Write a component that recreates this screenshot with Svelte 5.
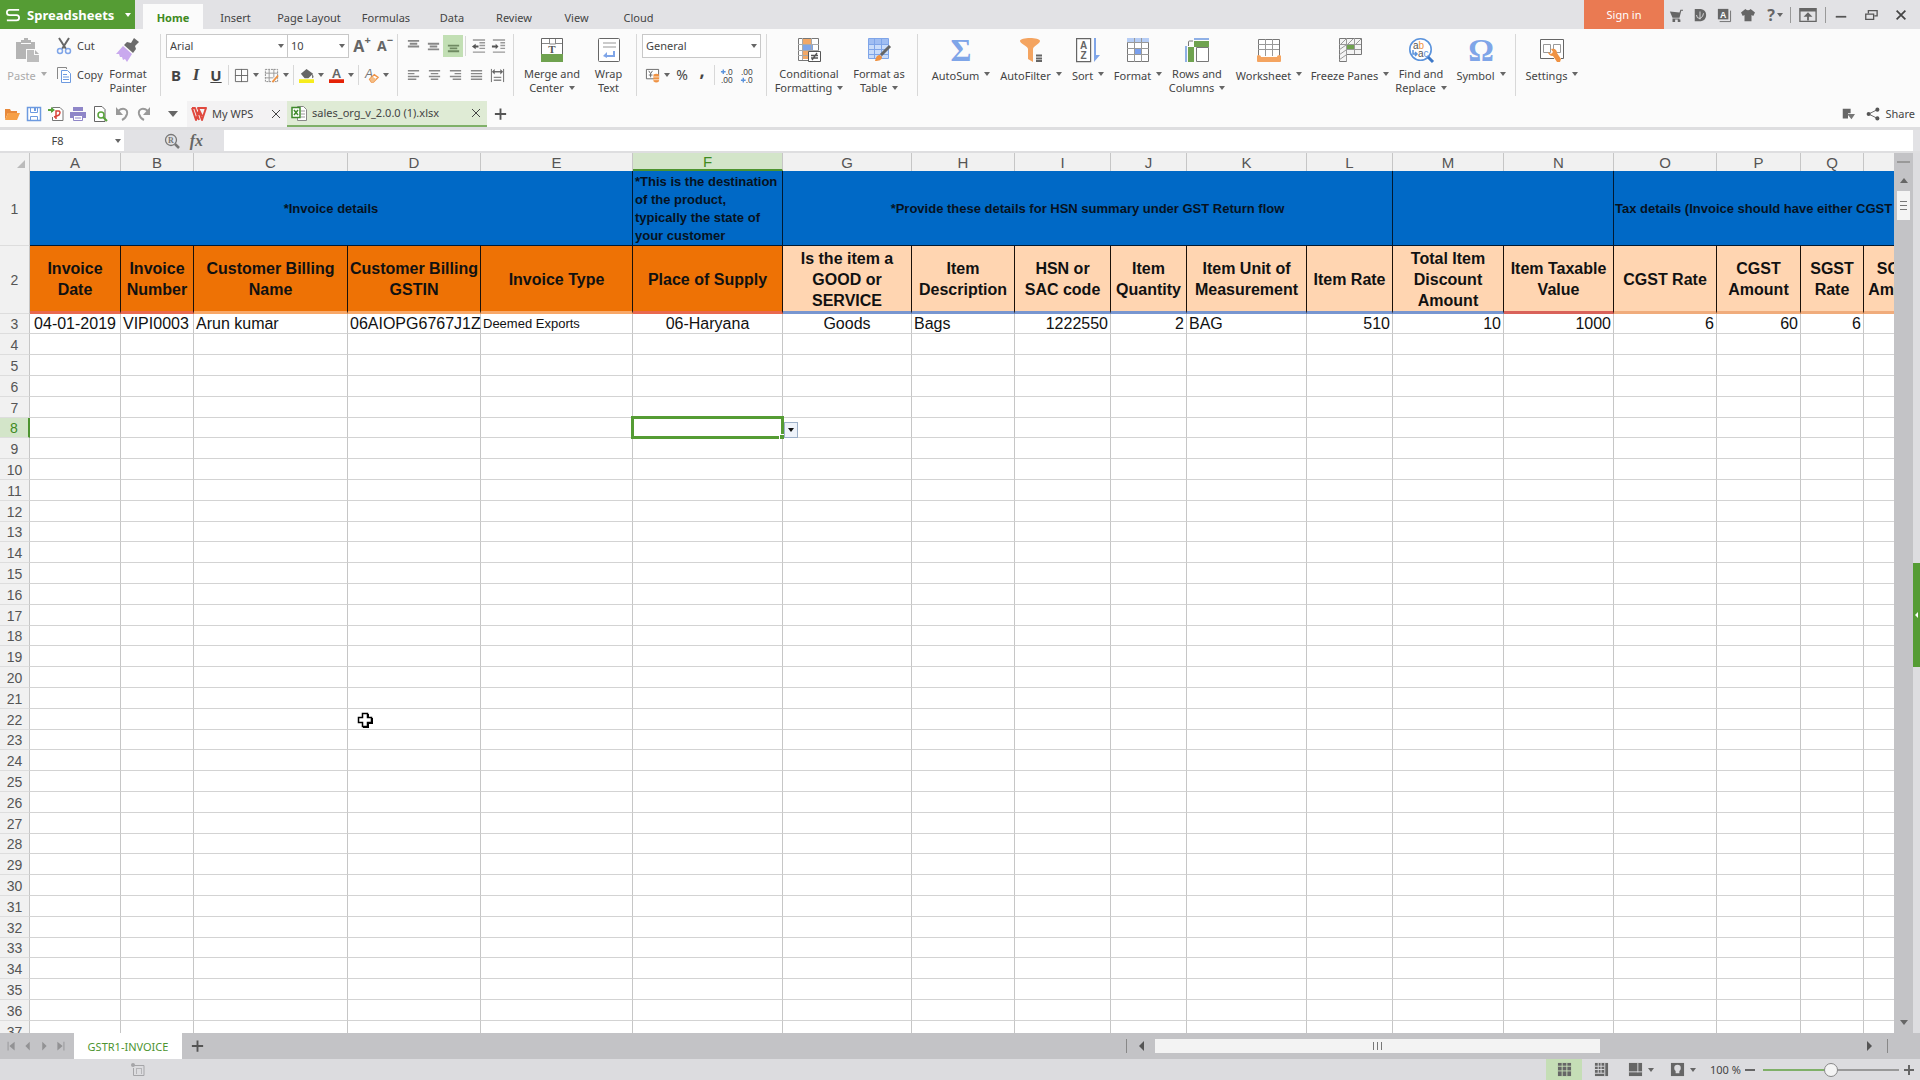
<script>
    let zoom = $state(50);
    let cellRef = $state("F8");
    let formula = $state("");
    let activeTab = $state("Home");

    const tabs = [
        { name: "Home", width: 60 },
        { name: "Insert", width: 65 },
        { name: "Page Layout", width: 82 },
        { name: "Formulas", width: 72 },
        { name: "Data", width: 60 },
        { name: "Review", width: 64 },
        { name: "View", width: 61 },
        { name: "Cloud", width: 63 },
    ];

    const editTools = [
        { icon: "autosum", lines: ["AutoSum"], width: 72 },
        { icon: "filter", lines: ["AutoFilter"], width: 68 },
        { icon: "sort", lines: ["Sort"], width: 46 },
        { icon: "format", lines: ["Format"], width: 54 },
        { icon: "rows", lines: ["Rows and", "Columns"], width: 64 },
        { icon: "worksheet", lines: ["Worksheet"], width: 80 },
        { icon: "freeze", lines: ["Freeze Panes"], width: 82 },
        { icon: "find", lines: ["Find and", "Replace"], width: 60 },
        { icon: "symbol", lines: ["Symbol"], width: 60 },
    ];

    // head: second row label, tone: header colour, rule: line under the header
    const columns = [
        { id: "A", width: 91, head: ["Invoice", "Date"], tone: "dark", rule: "red", value: "04-01-2019", align: "center" },
        { id: "B", width: 73, head: ["Invoice", "Number"], tone: "dark", rule: "red", value: "VIPI0003", align: "left" },
        { id: "C", width: 154, head: ["Customer Billing", "Name"], tone: "dark", rule: "sand", value: "Arun kumar", align: "left" },
        { id: "D", width: 133, head: ["Customer Billing", "GSTIN"], tone: "dark", rule: "sand", value: "06AIOPG6767J1Z", align: "left" },
        { id: "E", width: 152, head: ["Invoice Type"], tone: "dark", rule: "sand", value: "Deemed Exports", align: "compact" },
        { id: "F", width: 150, head: ["Place of Supply"], tone: "dark", rule: "red", value: "06-Haryana", align: "center" },
        { id: "G", width: 129, head: ["Is the item a", "GOOD or", "SERVICE"], tone: "light", rule: "blue", value: "Goods", align: "center" },
        { id: "H", width: 103, head: ["Item", "Description"], tone: "light", rule: "blue", value: "Bags", align: "left" },
        { id: "I", width: 96, head: ["HSN or", "SAC code"], tone: "light", rule: "blue", value: "1222550", align: "right" },
        { id: "J", width: 76, head: ["Item", "Quantity"], tone: "light", rule: "blue", value: "2", align: "right" },
        { id: "K", width: 120, head: ["Item Unit of", "Measurement"], tone: "light", rule: "blue", value: "BAG", align: "left" },
        { id: "L", width: 86, head: ["Item Rate"], tone: "light", rule: "blue", value: "510", align: "right" },
        { id: "M", width: 111, head: ["Total Item", "Discount", "Amount"], tone: "light", rule: "blue", value: "10", align: "right" },
        { id: "N", width: 110, head: ["Item Taxable", "Value"], tone: "light", rule: "crimson", value: "1000", align: "right" },
        { id: "O", width: 103, head: ["CGST Rate"], tone: "light", rule: "tan", value: "6", align: "right" },
        { id: "P", width: 84, head: ["CGST", "Amount"], tone: "light", rule: "tan", value: "60", align: "right" },
        { id: "Q", width: 63, head: ["SGST", "Rate"], tone: "light", rule: "tan", value: "6", align: "right" },
        { id: "", width: 70, head: ["SGST", "Amount"], tone: "light", rule: "tan", value: "", align: "right" },
    ];
    const tableWidth = columns.reduce((sum, c) => sum + c.width, 30);

    const emptyRows = Array.from({ length: 36 }, (_, i) => i + 4);

    const icons = {
        paste: `<path fill="#b4b4b4" d="M1 4h5V2h3V0h4v2h3v2h4v7h-9v10H1z"/><path fill="#fbfbfb" d="M6 5h10v1H6z"/><path fill="#bdbdbd" d="M12 12h7v5h5v7H12z"/><path fill="#b4b4b4" d="M20 12l4 4h-4z"/>`,
        brush: `<path fill="#6b6b6b" d="M18 0l5 4-4 4 1 3-3 4-9-8 3-3 4 1z"/><path fill="#c9a9ee" d="M7 8l9 8-5 8-2-3-2 1-1-3-2 0-1-3-3 0z"/>`,
        merge: `<path fill="#fff" stroke="#666" d="M1.500.500h21v23h-21z"/><path fill="#6fa24f" d="M1 16h22v8H1z"/><path fill="none" stroke="#888" d="M9.500 1v5h6V1M2 5.500h7M16 5.500h6"/><text x="12" y="15" font-size="11" font-family="Liberation Serif" font-weight="bold" text-anchor="middle" fill="#555">T</text>`,
        wrap: `<rect x="1.500" y=".5" width="21" height="23" rx="1" fill="#fff" stroke="#666"/><path stroke="#bbb" stroke-width="1.500" d="M6 5h13M6 9h13"/><path fill="#7fa5e8" d="M16 13h2v6h-8v1l-4-2 4-4v3h6z"/>`,
        conditional: `<path fill="#fff" stroke="#777" d="M1.500.500h20v22h-20z"/><path fill="#f3a866" d="M6 1h8v5H6zM6 12h7v9H6z"/><path fill="#7fa5e8" d="M6 6h10v6H6z"/><path fill="none" stroke="#aaa" d="M1 6.500h21M1 12.500h21M1 17.500h10M5.500 0v22M14.500 0v12"/><path fill="#fff" stroke="#555" d="M11.500 13.500h12v10h-12z"/><path stroke="#555" stroke-width="1.300" d="M14 17.500h7M14 20h7M20 15l-5 7"/>`,
        tableFormat: `<path fill="#c9dcfa" stroke="#7fa5e8" d="M1.500.500h20v20h-20z"/><path fill="#9fbdf2" d="M2 1h19v5H2z"/><path fill="none" stroke="#7fa5e8" d="M1 6.500h20M1 11.500h20M1 16.500h20M7.500 1v20M14.500 1v20"/><path stroke="#666" stroke-width="3" d="M23 8l-9 9"/><path fill="#ef9243" d="M8 23c1-4 2-6 5-6l2 2c0 3-3 4-7 4z"/>`,
        autosum: `<text x="12" y="23" font-size="32" font-family="Liberation Serif" font-weight="bold" text-anchor="middle" fill="#7fa5e8">Σ</text>`,
        filter: `<path fill="#f4a460" d="M1 3c0-4 20-4 20 0 0 3-7 5-7 8v13l-5-3V11C9 8 1 6 1 3z"/><path stroke="#666" stroke-width="2" d="M17 17.500h6M17 20.500h6M17 23h6"/>`,
        sort: `<path fill="#fff" stroke="#666" stroke-width="1.200" d="M.6.600h14v23H.6z"/><text x="7.500" y="11" font-size="10" font-family="Liberation Sans" font-weight="bold" text-anchor="middle" fill="#666">A</text><text x="7.500" y="21" font-size="10" font-family="Liberation Sans" font-weight="bold" text-anchor="middle" fill="#666">Z</text><path fill="#7fa5e8" d="M18 0h2v17h4l-6 7z"/>`,
        format: `<path fill="#fff" stroke="#777" d="M1.500.500h21v23h-21z"/><path fill="#b6cdf5" d="M1 0h22v4H1z"/><path fill="#7aa0ee" d="M9 10h7v6H9z"/><path fill="none" stroke="#999" d="M1 4.500h22M1 10.500h22M1 16.500h22M8.500 0v24M15.500 0v24"/>`,
        rows: `<path fill="#fff" stroke="#777" d="M11.500 9.500h12v14h-12z"/><path fill="#6fa24f" d="M9 3h15v6H9zM3 9h6v15H3z"/><path stroke="#8fb0e6" stroke-width="2" d="M9 1h15M1 8v16"/><path fill="none" stroke="#777" d="M3.500 8V4q0-1 1-1H8"/>`,
        worksheet: `<path fill="#fff" stroke="#777" d="M1.500 1.500h21v20h-21z"/><path fill="none" stroke="#999" d="M1 6.500h21M1 11.500h21M8.500 1v17M15.500 1v17"/><path fill="#f4a460" d="M1 17q3 0 3 2h16q0-2 3-2l1 1v5q0 1-1 1H1q-1 0-1-1v-5z"/>`,
        freeze: `<path fill="#f4f4f4" stroke="#777" d="M8.500 23.500h-7V.500h22v16h-15z"/><path fill="#6fa24f" d="M9 6h8v6H9z"/><path fill="none" stroke="#999" d="M8.500 0v24M1 6.500h22M9 11.500h14M16.500 0v16M1 12l7-5M1 17l7-5M1 22l7-5M3 6l5-5M10 6l5-5M18 6l5-5"/>`,
        find: `<circle cx="11.500" cy="11.500" r="10.700" fill="#fff" stroke="#5b93dc" stroke-width="1.600"/><path stroke="#3d78c8" stroke-width="3" d="M19 19l5 5"/><text x="4" y="11" font-size="10" font-family="Liberation Sans" fill="#555">a<tspan fill="#ef9243">b</tspan></text><text x="9" y="19" font-size="10" font-family="Liberation Sans" fill="#555">a<tspan fill="#5b93dc">c</tspan></text><path fill="none" stroke="#5b93dc" stroke-width="1.500" d="M4 12v4h4M6 14l2 2-2 2"/>`,
        symbol: `<text x="12" y="23" font-size="32" font-family="Liberation Serif" font-weight="bold" text-anchor="middle" fill="#7fa5e8">Ω</text>`,
        settings: `<path fill="#fff" stroke="#666" d="M14 20.500H.500v-19h23v19H21"/><path fill="none" stroke="#999" d="M3.500 6.500h7v8h-7zM13.500 6.500h7v8h-7z"/><path fill="#ef9243" d="M8 14l3 2 2-2-2-3c4-1 6 1 6 4l4 6-1 3h-3l-4-6c-3 0-5-2-5-4z"/>`,

        cut: `<path stroke="#666" stroke-width="2" d="M3 0l7 11M13 0L6 11"/><circle cx="4" cy="13" r="2.500" fill="none" stroke="#7fa5e8" stroke-width="1.500"/><circle cx="12" cy="13" r="2.500" fill="none" stroke="#7fa5e8" stroke-width="1.500"/>`,
        copy: `<path fill="none" stroke="#888" d="M1.500 12V.500h9V2"/><path fill="#fff" stroke="#6d9ae0" d="M5.500 3.500h6l3 3v9h-9z"/><path stroke="#6d9ae0" d="M7 7.500h4M7 10h6M7 12.500h6"/>`,
        border: `<path fill="none" stroke="#666" d="M1.500 1.500h13v13h-13zM8 1v14M1 8h14"/>`,
        drawBorder: `<path fill="none" stroke="#888" stroke-dasharray="2 1" d="M1.500 1.500h13v13h-13z"/><path stroke="#999" d="M5.500 1v14M10.500 1v9M1 5.500h14M1 10.500h9"/><path stroke="#ef9243" stroke-width="2" d="M15 8l-6 7"/>`,
        fill: `<path fill="#666" d="M2 6l6-5 7 5-5 5H6zM14 6q3 4 0 5z"/><path fill="#f6ec1d" d="M0 12h16v4H0z"/>`,
        fontColor: `<text x="8" y="11" font-size="14" font-family="Liberation Sans" font-weight="bold" text-anchor="middle" fill="#666">A</text><path fill="#e52207" d="M0 12h16v4H0z"/>`,
        clear: `<text x="1" y="11" font-size="13" font-family="Liberation Sans" font-style="italic" fill="#777">A</text><path fill="#fff" stroke="#ef9243" stroke-width="1.500" d="M6 12l5-5 4 3-5 5H8z"/><path fill="#f4bd86" d="M9 9l4 3-3 3H8l-2-3z"/>`,
        top: `<path stroke="#888" stroke-width="2" d="M2 2h12M4 5h8M2 8h12"/>`,
        middle: `<path stroke="#888" stroke-width="2" d="M2 5h12M4 8h8M2 11h12"/>`,
        bottom: `<path stroke="#6f8a62" stroke-width="2" d="M2 7h12M4 10h8M2 13h12"/>`,
        outdent: `<path stroke="#999" stroke-width="1.500" d="M2 1h13M9 4h6M9 7h6M9 10h6M2 14h13"/><path fill="#555" d="M1 8l4-3v2h3v2H5v2z"/>`,
        indent: `<path stroke="#999" stroke-width="1.500" d="M2 1h13M10 4h5M10 7h5M10 10h5M2 14h13"/><path fill="#555" d="M8 8L5 5v2H1v2h4v2z"/>`,
        left: `<path stroke="#888" stroke-width="1.500" d="M2 3h12M2 6h7M2 9h12M2 12h9"/>`,
        center: `<path stroke="#888" stroke-width="1.500" d="M2 3h12M4 6h8M2 9h12M4 12h8"/>`,
        right: `<path stroke="#888" stroke-width="1.500" d="M2 3h12M7 6h7M2 9h12M5 12h9"/>`,
        justify: `<path stroke="#888" stroke-width="1.500" d="M2 3h12M2 6h12M2 9h12M2 12h12"/>`,
        distribute: `<path stroke="#666" d="M1.500 1v14M14.500 1v14"/><path stroke="#666" stroke-width="1.500" d="M4 4h8"/><path fill="#666" d="M2 4l3-3v6zM14 4l-3-3v6z"/><path stroke="#888" stroke-width="1.500" d="M4 10h8M4 13h8"/>`,
        currency: `<path fill="#fff" stroke="#666" d="M1.500 1.500h13v10h-13z"/><path fill="none" stroke="#666" d="M4 3l2 3 2-3M6 6v4M4 7.500h4"/><path fill="#ef9243" d="M9 7q3-2 6 0v7q-3 3-6 0z"/><path stroke="#fbe0c4" d="M9 9.500h6M9 12.500h6"/>`,
        incDecimal: `<path fill="none" stroke="#5b93dc" stroke-width="1.500" d="M1 4h5M3.500 1.500v5"/><text x="6" y="7" font-size="9" font-family="Liberation Sans" fill="#444">.0</text><text x="1" y="16" font-size="9" font-family="Liberation Sans" fill="#444">.00</text>`,
        decDecimal: `<text x="1" y="7" font-size="9" font-family="Liberation Sans" fill="#444">.00</text><path fill="none" stroke="#5b93dc" stroke-width="1.500" d="M1 13h5M3.500 10.500v5"/><text x="6" y="16" font-size="9" font-family="Liberation Sans" fill="#444">.0</text>`,

        open: `<path fill="#e8893a" d="M1 3h5l1 2h6v2H4l-3 7z"/><path fill="#f7a046" d="M4 7h12l-3 7H1z"/>`,
        save: `<path fill="#fff" stroke="#6d9ae0" stroke-width="1.500" d="M1.500 1.500h13v13h-13z"/><path fill="none" stroke="#6d9ae0" d="M4.500 1v5.500h7V1"/><path fill="#6d9ae0" d="M8 2h2v3H8z"/><path fill="none" stroke="#6d9ae0" d="M4.500 15v-4.500h7V15"/>`,
        pdf: `<path fill="#fff" stroke="#777" d="M4.500 6V1.500H12l3 3v10H4.500V11"/><path fill="none" stroke="#d9453b" stroke-width="1.500" d="M8 13V5h3q2 1 0 4-2 1-5 2"/><path fill="#57a33a" d="M0 3h3V1l4 3-4 3V5H0z"/>`,
        print: `<path fill="#8f86c8" d="M3 1h10v4H3zM0 6h16v6H0z"/><path fill="#fff" stroke="#8f86c8" d="M3.500 9.500h9v5h-9z"/><path stroke="#8f86c8" d="M5 12h6"/>`,
        preview: `<path fill="#fff" stroke="#666" d="M2.500.500H10l3 3v12H2.500z"/><circle cx="9" cy="9" r="3" fill="#fff" stroke="#57a33a" stroke-width="1.500"/><path stroke="#57a33a" stroke-width="2" d="M11 11l4 4"/>`,
        undo: `<path fill="none" stroke="#999" stroke-width="2" d="M4 5c5-4 10-2 9 3-1 4-3 5-5 6"/><path fill="#999" d="M2 1v8h7z"/>`,
        redo: `<path fill="none" stroke="#999" stroke-width="2" d="M12 5C7 1 2 3 3 8c1 4 3 5 5 6"/><path fill="#999" d="M14 1v8H7z"/>`,
        wps: `<path fill="none" stroke="#e0483e" stroke-width="2" stroke-linejoin="round" d="M1 2l4 12 3-9 3 9 4-12H7l4 8M1 2h3l4 12"/>`,
        sheet: `<path fill="#fff" stroke="#888" d="M6.500 1.500h6l3 3v11h-9z"/><path stroke="#999" d="M10 6h4M10 9h4M10 12h4"/><path fill="#fff" stroke="#3f8a2b" stroke-width="1.500" d="M1 2.500h8v10H1z"/><path stroke="#3f8a2b" stroke-width="1.500" d="M3 5l4 5M7 5l-4 5"/>`,
        search: `<circle cx="7" cy="7" r="5.500" fill="none" stroke="#777" stroke-width="1.300"/><text x="7" y="10" font-size="8" font-family="Liberation Serif" font-weight="bold" text-anchor="middle" fill="#777">R</text><path stroke="#777" stroke-width="2.500" d="M11 11l4 4"/>`,

        cart: `<path fill="#666" d="M1 4l11 1 1-3h3v1h-2l-2 8H4zM4 12h8v1H4zM4 13h3v3H4zM10 13h3v3h-3z"/>`,
        docer: `<path fill="#666" d="M2 1h7q6 1 6 7t-6 7H2z"/><path fill="none" stroke="#e2e2e5" d="M8 4v9M8 12q-4 0-4-4M8 12q4-2 4-6"/>`,
        template: `<path fill="#666" d="M1 1h12v12H1z"/><path fill="none" stroke="#666" d="M15.500 3v12.500H3"/><text x="7" y="11" font-size="10" font-family="Liberation Sans" font-weight="bold" text-anchor="middle" fill="#fff">A</text>`,
        skin: `<path fill="#666" d="M5 1q3 3 6 0l5 4-2 4-2-1v7H4V8L2 9 0 5z"/>`,
        collapse: `<path fill="none" stroke="#666" stroke-width="1.500" d="M1 1h18v14H1z"/><path fill="#666" d="M1 1h18v3H1zM10 5l5 5h-4v4H9v-4H5z"/>`,
        minimize: `<path fill="#555" d="M2 9h12v2H2z"/>`,
        restore: `<path fill="none" stroke="#555" stroke-width="1.500" d="M2 7h9v6H2zM5 6V3h10v6h-3"/>`,
        close: `<path stroke="#444" stroke-width="2" d="M3 3l10 10M13 3L3 13"/>`,
        thinClose: `<path stroke="#444" d="M4 4l8 8M12 4l-8 8"/>`,
        plus: `<path stroke="#555" stroke-width="2" d="M8 2v12M2 8h12"/>`,
        panel: `<path fill="#666" d="M2 2h9v5H8v6H2z"/><path fill="#777" d="M7 8h9l-4 6z"/>`,
        share: `<path stroke="#555" fill="none" d="M13 3L3 8l10 5"/><circle cx="13" cy="3" r="2.300" fill="#555"/><circle cx="3" cy="8" r="2.300" fill="#555"/><circle cx="13" cy="13" r="2.300" fill="#555"/>`,
        first: `<path fill="#929294" d="M3 3h1v10H3zM11 3v10L5 8z"/>`,
        prev: `<path fill="#929294" d="M10 3v10L5 8z"/>`,
        next: `<path fill="#929294" d="M6 3v10l5-5z"/>`,
        last: `<path fill="#929294" d="M5 3v10l6-5zM12 3h1v10h-1z"/>`,
        macro: `<path fill="none" stroke="#a5a5a8" d="M4 3.500h10v10H3.500V6"/><path stroke="#b5b5b8" d="M6 6.500h6M6.500 6v6M11.500 6v6"/><circle cx="3" cy="3" r="2" fill="#a5a5a8"/>`,
        viewNormal: `<path fill="#666" d="M1 1h14v14H1z"/><path stroke="#c5deb6" d="M1 4.500h14M1 9.500h14M5.500 1v14M10.500 1v14"/>`,
        viewBreak: `<path fill="#666" d="M1 1h14v14H1z"/><path stroke="#dcdcdf" d="M1 4.500h10M1 8h10M4.500 1v11M7.500 1v11M11.500 1v14M1 12h10"/>`,
        viewFull: `<path fill="#666" d="M1 1h14v14H1z"/><path stroke="#dcdcdf" d="M1 10.500h14M10.500 1v10"/>`,
        eyeCare: `<path fill="#666" d="M1 1h14v14H1z"/><circle cx="8" cy="6.500" r="3.500" fill="#dcdcdf"/><path fill="#dcdcdf" d="M6 8h4v4H6z"/>`,
    };
</script>

{#snippet small(name)}
    <svg class="small" viewBox="0 0 16 16" aria-hidden="true">{@html icons[name]}</svg>
{/snippet}

{#snippet tool(name, label)}
    <button class="tool" aria-label={label}>{@render small(name)}</button>
{/snippet}

{#snippet dropTool(name, label)}
    {@render tool(name, label)}
    <button class="drop" aria-label="{label} options"><i class="caret"></i></button>
{/snippet}

{#snippet big(icon, lines, width, caret = true)}
    <button class="big" style="width: {width}px">
        <svg viewBox="0 0 24 24" aria-hidden="true">{@html icons[icon]}</svg>
        {#each lines as line, i}
            <span class:single={lines.length === 1}>
                {line}{#if caret && i === lines.length - 1}<i class="caret"></i>{/if}
            </span>
        {/each}
    </button>
{/snippet}

<div class="app">
    <header class="title-bar">
        <button class="brand">
            <svg viewBox="0 0 16 16" aria-hidden="true">
                <path fill="none" stroke="#fff" stroke-width="2" d="M15 2H4Q1 2 1 5t3 3h8q3 0 3 3t-3 3H1" />
            </svg>
            <span>Spreadsheets</span>
            <i class="caret"></i>
        </button>
        <nav>
            {#each tabs as tab}
                <button
                    class="tab"
                    class:active={tab.name === activeTab}
                    style="width: {tab.width}px"
                    onclick={() => (activeTab = tab.name)}>{tab.name}</button
                >
            {/each}
        </nav>
        <button class="sign-in">Sign in</button>
        <div class="window-tools">
            <button class="wide" aria-label="Shop">{@render small("cart")}</button>
            <button class="wide" aria-label="Docer">{@render small("docer")}</button>
            <button class="wide" aria-label="Templates">{@render small("template")}</button>
            <button class="wide" aria-label="Skins">{@render small("skin")}</button>
            <button class="help">?<i class="caret"></i></button>
            <i class="line"></i>
            <button class="ribbon-toggle" aria-label="Hide ribbon">
                <svg viewBox="0 0 20 16" aria-hidden="true">{@html icons.collapse}</svg>
            </button>
            <i class="line"></i>
            <button class="window" aria-label="Minimize">{@render small("minimize")}</button>
            <button class="window" aria-label="Restore">{@render small("restore")}</button>
            <button class="window" aria-label="Close">{@render small("close")}</button>
        </div>
    </header>

    <section class="ribbon">
        <div class="group clipboard">
            <div class="disabled">{@render big("paste", ["Paste"], 54)}</div>
            <div class="stack">
                <button class="text-tool">{@render small("cut")}Cut</button>
                <button class="text-tool">{@render small("copy")}Copy</button>
            </div>
            {@render big("brush", ["Format", "Painter"], 52, false)}
        </div>

        <div class="group font">
            <div class="stack">
                <div class="tools">
                    <label class="picker family">
                        <select aria-label="Font"><option>Arial</option></select>
                        <i class="caret"></i>
                    </label>
                    <label class="picker size">
                        <select aria-label="Font size"><option>10</option></select>
                        <i class="caret"></i>
                    </label>
                    <button class="tool grow">A<sup>+</sup></button>
                    <button class="tool grow shrink">A<sup>−</sup></button>
                </div>
                <div class="tools">
                    <button class="tool letter"><b>B</b></button>
                    <button class="tool letter"><em>I</em></button>
                    <button class="tool letter"><u>U</u></button>
                    <i class="split"></i>
                    {@render dropTool("border", "Borders")}
                    {@render dropTool("drawBorder", "Draw borders")}
                    <i class="split"></i>
                    {@render dropTool("fill", "Fill color")}
                    {@render dropTool("fontColor", "Font color")}
                    <i class="split"></i>
                    {@render dropTool("clear", "Clear")}
                </div>
            </div>
        </div>

        <div class="group align">
            <div class="stack">
                <div class="tools">
                    {@render tool("top", "Align top")}
                    {@render tool("middle", "Align middle")}
                    <button class="tool pressed" aria-label="Align bottom">{@render small("bottom")}</button>
                    <i class="split"></i>
                    {@render tool("outdent", "Decrease indent")}
                    {@render tool("indent", "Increase indent")}
                </div>
                <div class="tools spaced">
                    {@render tool("left", "Align left")}
                    {@render tool("center", "Center")}
                    {@render tool("right", "Align right")}
                    {@render tool("justify", "Justify")}
                    {@render tool("distribute", "Distribute")}
                </div>
            </div>
        </div>

        <div class="group merge">
            {@render big("merge", ["Merge and", "Center"], 76)}
            {@render big("wrap", ["Wrap", "Text"], 37, false)}
        </div>

        <div class="group number">
            <div class="stack">
                <label class="picker general">
                    <select aria-label="Number format"><option>General</option></select>
                    <i class="caret"></i>
                </label>
                <div class="tools">
                    {@render dropTool("currency", "Currency")}
                    <button class="tool symbol">%</button>
                    <button class="tool symbol comma">,</button>
                    <i class="split"></i>
                    {@render tool("incDecimal", "Increase decimal")}
                    {@render tool("decDecimal", "Decrease decimal")}
                </div>
            </div>
        </div>

        <div class="group styles">
            {@render big("conditional", ["Conditional", "Formatting"], 84)}
            {@render big("tableFormat", ["Format as", "Table"], 56)}
        </div>

        <div class="group editing">
            {#each editTools as t}
                {@render big(t.icon, t.lines, t.width)}
            {/each}
        </div>

        <div class="group">
            {@render big("settings", ["Settings"], 72)}
        </div>
    </section>

    <section class="quick-bar">
        <div class="quick-tools">
            <button aria-label="Open">{@render small("open")}</button>
            <button aria-label="Save">{@render small("save")}</button>
            <button aria-label="Export to PDF">{@render small("pdf")}</button>
            <button aria-label="Print">{@render small("print")}</button>
            <button aria-label="Print preview">{@render small("preview")}</button>
            <button aria-label="Undo">{@render small("undo")}</button>
            <button aria-label="Redo">{@render small("redo")}</button>
            <i class="split"></i>
            <button class="more" aria-label="Customize"><i class="caret large"></i></button>
        </div>
        <div class="doc-tab home">
            {@render small("wps")}
            <span>My WPS</span>
            <button aria-label="Close My WPS">{@render small("thinClose")}</button>
        </div>
        <div class="doc-tab current">
            {@render small("sheet")}
            <span>sales_org_v_2.0.0 (1).xlsx</span>
            <button aria-label="Close file">{@render small("thinClose")}</button>
        </div>
        <button class="new-doc" aria-label="New file">{@render small("plus")}</button>
        <button class="panel-menu" aria-label="Task panes">{@render small("panel")}</button>
        <button class="share">{@render small("share")}Share</button>
    </section>

    <section class="formula-bar">
        <label class="name-box">
            <input aria-label="Name box" bind:value={cellRef} />
            <i class="caret"></i>
        </label>
        <div class="formula-tools">
            <button aria-label="Browse formula result">{@render small("search")}</button>
            <button class="fx">fx</button>
        </div>
        <input class="formula" aria-label="Formula" bind:value={formula} />
    </section>

    <main>
        <div class="grid">
            <table style="width: {tableWidth}px">
                <colgroup>
                    <col class="index" />
                    {#each columns as col}
                        <col style="width: {col.width}px" />
                    {/each}
                </colgroup>
                <thead>
                    <tr>
                        <th class="corner"><i></i></th>
                        {#each columns as col}
                            <th class:selected={col.id === "F"}>{col.id}</th>
                        {/each}
                    </tr>
                </thead>
                <tbody class="top">
                    <tr class="banner">
                        <th>1</th>
                        <td colspan="5">*Invoice details</td>
                        <td class="note">*This is the destination of the product, typically the state of your customer</td>
                        <td colspan="6">*Provide these details for HSN summary under GST Return flow</td>
                        <td colspan="2"></td>
                        <td class="tax" colspan="4">Tax details (Invoice should have either CGST</td>
                    </tr>
                    <tr class="names">
                        <th>2</th>
                        {#each columns as col}
                            <td class="{col.tone} {col.rule}">
                                {#each col.head as line}<div>{line}</div>{/each}
                            </td>
                        {/each}
                    </tr>
                    <tr class="values">
                        <th>3</th>
                        {#each columns as col}
                            <td class={col.align}>{col.value}</td>
                        {/each}
                    </tr>
                </tbody>
                <tbody class="empty">
                    {#each emptyRows as row}
                        <tr>
                            <th class:selected={row === 8}>{row}</th>
                            {#each columns as col}
                                {#if row === 8 && col.id === "F"}
                                    <td class="active-cell">
                                        <div class="outline"></div>
                                        <button aria-label="Pick from list"><i class="caret"></i></button>
                                    </td>
                                {:else}
                                    <td></td>
                                {/if}
                            {/each}
                        </tr>
                    {/each}
                </tbody>
            </table>
        </div>
        <div class="v-scroll">
            <i class="grip"></i>
            <button aria-label="Scroll up"><i class="caret up"></i></button>
            <div class="thumb"><i></i><i></i><i></i></div>
            <button class="down" aria-label="Scroll down"><i class="caret"></i></button>
        </div>
        <div class="side">
            <button aria-label="Open task pane"></button>
        </div>
    </main>

    <section class="sheet-bar">
        <div class="sheet-nav">
            <button aria-label="First sheet">{@render small("first")}</button>
            <button aria-label="Previous sheet">{@render small("prev")}</button>
            <button aria-label="Next sheet">{@render small("next")}</button>
            <button aria-label="Last sheet">{@render small("last")}</button>
        </div>
        <button class="sheet-tab">GSTR1-INVOICE</button>
        <button class="add-sheet" aria-label="Add sheet">{@render small("plus")}</button>
        <div class="h-scroll">
            <i class="bar"></i>
            <button aria-label="Scroll left"><i class="arrow left"></i></button>
            <div class="track">
                <div class="thumb"><i></i><i></i><i></i></div>
            </div>
            <button class="end" aria-label="Scroll right"><i class="arrow right"></i></button>
            <i class="bar"></i>
        </div>
    </section>

    <footer>
        <button class="macro" aria-label="Record macro">{@render small("macro")}</button>
        <button class="view on" aria-label="Normal view">{@render small("viewNormal")}</button>
        <button class="view" aria-label="Page break view">{@render small("viewBreak")}</button>
        <button class="view" aria-label="Full screen">{@render small("viewFull")}<i class="caret"></i></button>
        <button class="view" aria-label="Eye protection">{@render small("eyeCare")}<i class="caret"></i></button>
        <span class="percent">100 %</span>
        <button class="step" aria-label="Zoom out"><i></i></button>
        <input type="range" aria-label="Zoom" min="0" max="100" bind:value={zoom} />
        <button class="step plus" aria-label="Zoom in"><i></i></button>
    </footer>

    <svg class="pointer" viewBox="0 0 16 16" aria-hidden="true">
        <path fill="#fff" stroke="#000" stroke-width="1.500" d="M5.500 1.500h5v4h4v5h-4v4h-5v-4h-4v-5h4z" />
        <path fill="none" stroke="#000" stroke-width="2" d="M11 2v3.500M15 6v5h-4v4H6" />
    </svg>
</div>

<style>
    :global(body) {
        margin: 0;
        overflow: hidden;
    }

    .app {
        display: flex;
        flex-direction: column;
        height: 100vh;
        position: relative;
        overflow: hidden;
        background: #fbfbfb;
        color: #444;
        font: 11px/14px "Noto Sans", "Open Sans", sans-serif;
    }

    button,
    input,
    select {
        margin: 0;
        padding: 0;
        border: 0;
        border-radius: 0;
        background: none;
        color: inherit;
        font: inherit;
        outline: none;
        box-sizing: border-box;
    }

    button {
        display: flex;
        align-items: center;
        justify-content: center;
        flex-shrink: 0;
        white-space: nowrap;
    }

    svg {
        overflow: visible;
    }

    .small {
        width: 16px;
        height: 16px;
        flex-shrink: 0;
    }

    .caret {
        display: inline-block;
        flex-shrink: 0;
        border: 3px solid transparent;
        border-top: 4px solid #666;
        border-bottom: 0;
    }

    .caret.large {
        border-width: 5px;
        border-top-width: 6px;
        border-bottom: 0;
    }

    .caret.up {
        border-top: 0;
        border-bottom: 5px solid #666;
    }

    /* title bar */
    .title-bar {
        display: flex;
        height: 29px;
        flex-shrink: 0;
        background: #e2e2e5;
    }

    .brand {
        width: 135px;
        padding: 0 4px 0 6px;
        gap: 7px;
        justify-content: flex-start;
        background: #559c34;
        color: #fff;
        font-size: 13px;
        font-weight: bold;
    }

    .brand span {
        flex: 1;
        text-align: left;
    }

    .brand svg {
        width: 14px;
        height: 14px;
    }

    .brand .caret {
        border-top-color: #fff;
    }

    nav {
        display: flex;
        flex: 1;
        align-items: flex-end;
        padding-left: 8px;
    }

    .tab {
        height: 25px;
        padding-top: 3px;
    }

    .tab.active {
        background: #fbfbfb;
        color: #3f8a22;
        font-weight: bold;
    }

    .sign-in {
        width: 80px;
        background: #ea7a52;
        color: #fff;
    }

    .window-tools {
        display: flex;
        align-items: center;
        width: 256px;
        padding-right: 4px;
        box-sizing: border-box;
    }

    .window-tools .small {
        width: 14px;
        height: 14px;
    }

    .window-tools .wide {
        width: 24px;
    }

    .help {
        width: 30px;
        gap: 2px;
        font-size: 16px;
        font-weight: bold;
        color: #666;
    }

    .line {
        width: 1px;
        height: 16px;
        background: #999;
    }

    .ribbon-toggle {
        width: 34px;
    }

    .ribbon-toggle svg {
        width: 18px;
        height: 16px;
    }

    .window {
        flex: 1;
    }

    /* ribbon */
    .ribbon {
        display: flex;
        height: 67px;
        padding-top: 5px;
        flex-shrink: 0;
    }

    .group {
        display: flex;
        height: 62px;
        flex-shrink: 0;
        box-sizing: border-box;
        border-right: 1px solid #d8d8d8;
    }

    .group:last-child {
        border-right: 0;
    }

    .clipboard {
        width: 161px;
    }

    .disabled {
        color: #aaa;
    }

    .disabled .caret {
        border-top-color: #aaa;
    }

    .font {
        width: 237px;
        padding-left: 5px;
    }

    .align {
        width: 116px;
        padding-left: 5px;
    }

    .merge {
        width: 123px;
    }

    .number {
        width: 130px;
        padding-left: 5px;
    }

    .styles {
        width: 151px;
    }

    .editing {
        width: 598px;
        padding-left: 7px;
    }

    .big {
        height: 62px;
        padding-top: 4px;
        flex-direction: column;
        justify-content: flex-start;
    }

    .big svg {
        width: 24px;
        height: 24px;
        margin-bottom: 5px;
        flex-shrink: 0;
    }

    .big span {
        display: flex;
        align-items: center;
        gap: 5px;
        line-height: 14px;
    }

    .big .single {
        line-height: 18px;
    }

    .big .single .caret {
        margin-bottom: 4px;
    }

    .stack {
        display: flex;
        flex-direction: column;
        gap: 5px;
    }

    .tools {
        display: flex;
        align-items: center;
        height: 24px;
    }

    .tools.spaced {
        gap: 1px;
    }

    .text-tool {
        height: 24px;
        padding-left: 2px;
        gap: 5px;
        width: 48px;
        justify-content: flex-start;
    }

    .tool {
        width: 20px;
        height: 22px;
    }

    .tool .small {
        width: 15px;
        height: 15px;
    }

    .drop {
        width: 10px;
        height: 22px;
    }

    .pressed {
        background: #c2dfb4;
    }

    .split {
        width: 1px;
        height: 20px;
        margin: 0 2px;
        background: #d8d8d8;
    }

    .letter {
        font-size: 15px;
    }

    .letter em {
        font-family: "Liberation Serif", serif;
        font-size: 17px;
        font-weight: bold;
    }

    .letter u {
        font-weight: bold;
    }

    .grow {
        margin-left: 3px;
        font-size: 16px;
        font-weight: bold;
        color: #666;
    }

    .shrink {
        font-size: 14px;
    }

    .grow sup {
        font-size: 11px;
        line-height: 10px;
        align-self: flex-start;
    }

    .symbol {
        font-size: 14px;
    }

    .comma {
        padding-bottom: 10px;
        font-size: 18px;
        font-weight: bold;
    }

    .picker {
        display: flex;
        align-items: center;
        box-sizing: border-box;
        height: 24px;
        padding-right: 3px;
        border: 1px solid #c8c8c8;
        background: #fff;
    }

    .picker select {
        flex: 1;
        min-width: 0;
        padding-left: 3px;
        appearance: none;
    }

    .family {
        width: 121px;
        border-right: 0;
    }

    .size {
        width: 62px;
    }

    .general {
        width: 119px;
    }

    /* quick access and document tabs */
    .quick-bar {
        display: flex;
        height: 26px;
        flex-shrink: 0;
        border-bottom: 3px solid #dedee0;
    }

    .quick-tools {
        display: flex;
        align-items: center;
        width: 187px;
        padding-left: 1px;
        box-sizing: border-box;
    }

    .quick-tools button {
        width: 22px;
    }

    .quick-tools .more {
        width: 28px;
    }

    .doc-tab {
        display: flex;
        align-items: center;
        box-sizing: border-box;
        gap: 5px;
        padding: 0 3px 0 4px;
    }

    .doc-tab span {
        flex: 1;
        white-space: nowrap;
    }

    .home {
        width: 100px;
        background: #f3f2f3;
    }

    .current {
        width: 200px;
        background: #dfebd5;
        border-bottom: 2px solid #7fb068;
    }

    .new-doc {
        width: 26px;
    }

    .new-doc .small {
        width: 15px;
    }

    .panel-menu {
        width: 26px;
        margin-left: auto;
    }

    .panel-menu .small,
    .share .small {
        width: 14px;
        height: 14px;
    }

    .share {
        padding: 0 5px;
        gap: 5px;
    }

    /* formula bar */
    .formula-bar {
        display: flex;
        height: 21px;
        padding-right: 7px;
        flex-shrink: 0;
        background: #e2e2e5;
        border-bottom: 2px solid #dedee0;
    }

    .name-box {
        display: flex;
        align-items: center;
        box-sizing: border-box;
        width: 124px;
        padding-right: 3px;
        background: #fff;
    }

    .name-box input {
        flex: 1;
        min-width: 0;
        text-align: center;
    }

    .formula-tools {
        display: flex;
        justify-content: flex-end;
        width: 100px;
        padding-right: 21px;
        box-sizing: border-box;
        gap: 10px;
    }

    .fx {
        font: italic bold 16px/20px "Liberation Serif", serif;
        color: #666;
    }

    .formula {
        flex: 1;
        padding: 0 4px;
        background: #fff;
    }

    /* sheet */
    main {
        display: flex;
        flex: 1;
        min-height: 0;
    }

    .grid {
        flex: 1;
        min-width: 0;
        overflow: hidden;
        background: #fff;
    }

    table {
        table-layout: fixed;
        border-collapse: separate;
        border-spacing: 0;
        color: #111;
        font: 16px/18px "Liberation Sans", Arial, sans-serif;
    }

    .index {
        width: 30px;
    }

    th,
    td {
        box-sizing: border-box;
        padding: 1px 0 0;
        white-space: nowrap;
    }

    th {
        background: #f1f1f1;
        color: #555;
        font-size: 14px;
        font-weight: normal;
    }

    thead th {
        height: 18px;
        font-size: 15px;
        line-height: 17px;
        border-right: 1px solid #c6c6c6;
    }

    thead .selected {
        background: #d3e5c9;
        color: #3f8a22;
        border-bottom: 2px solid #4d9430;
        line-height: 15px;
    }

    .corner i {
        display: block;
        width: 0;
        margin: 3px 4px 0 auto;
        border: 4px solid transparent;
        border-right-color: #bbb;
        border-bottom-color: #bbb;
    }

    tbody th {
        border-right: 1px solid #c6c6c6;
        border-bottom: 1px solid #ddd;
    }

    tbody .selected {
        background: #d3e5c9;
        color: #3f8a22;
        border-right: 2px solid #4d9430;
    }

    .banner th,
    .banner td {
        height: 75px;
    }

    .banner td {
        overflow: hidden;
        background: #0069c6;
        border-right: 1px solid #001a33;
        border-bottom: 1px solid #001a33;
        color: #06121f;
        font-size: 13px;
        font-weight: bold;
        text-align: center;
    }

    .banner .note {
        padding-left: 2px;
        padding-right: 4px;
        text-align: left;
        white-space: normal;
    }

    .banner .tax {
        padding-left: 1px;
        text-align: left;
    }

    .names th,
    .names td {
        height: 68px;
    }

    .names td {
        border-right: 1px solid #1a1008;
        border-bottom: 3px solid;
        font-weight: bold;
        line-height: 21px;
        text-align: center;
    }

    .dark {
        background: #ee7205;
    }

    .light {
        background: #ffd5b1;
    }

    .names .red {
        border-bottom-color: #e9694f;
    }

    .names .sand {
        border-bottom-color: #f8a868;
    }

    .names .blue {
        border-bottom-color: #7896d0;
    }

    .names .crimson {
        border-bottom-color: #d9625a;
    }

    .names .tan {
        border-bottom-color: #f0ac7c;
    }

    .values th,
    .values td {
        height: 20px;
    }

    .values td,
    .empty td {
        border-right: 1px solid #c6c6c6;
        border-bottom: 1px solid #d3d3d3;
    }

    .center {
        text-align: center;
    }

    .left {
        padding-left: 2px;
    }

    .right {
        padding-right: 2px;
        text-align: right;
    }

    .compact {
        padding-left: 2px;
        font-size: 13px;
    }

    .empty th,
    .empty td {
        height: 21px;
    }

    .empty tr:nth-child(5n) th,
    .empty tr:nth-child(5n) td {
        height: 20px;
    }

    .active-cell {
        position: relative;
    }

    .outline {
        position: absolute;
        inset: -2px;
        border: 3px solid #559c34;
    }

    .outline::after {
        content: "";
        position: absolute;
        right: -3px;
        bottom: -3px;
        width: 4px;
        height: 4px;
        background: #559c34;
        border: 1px solid #fff;
        border-right: 0;
        border-bottom: 0;
    }

    .active-cell button {
        position: absolute;
        left: 100%;
        top: 4px;
        margin-left: 2px;
        width: 14px;
        height: 16px;
        background: #eef3fa;
        border: 1px solid #9db0c8;
    }

    .active-cell .caret {
        border-top-color: #111;
    }

    .v-scroll {
        display: flex;
        flex-direction: column;
        align-items: center;
        width: 19px;
        background: #c3c3c6;
    }

    .grip {
        width: 13px;
        height: 2px;
        margin: 8px 0 6px;
        background: #999;
    }

    .v-scroll button {
        width: 19px;
        height: 22px;
    }

    .v-scroll .caret {
        border-left-width: 4px;
        border-right-width: 4px;
        border-top-width: 5px;
    }

    .v-scroll .caret.up {
        border-top-width: 0;
    }

    .v-scroll .down {
        margin-top: auto;
    }

    .v-scroll .thumb {
        display: flex;
        flex-direction: column;
        align-items: center;
        justify-content: center;
        gap: 3px;
        width: 13px;
        height: 29px;
        background: #f4f4f4;
    }

    .v-scroll .thumb i {
        width: 7px;
        height: 1px;
        background: #777;
    }

    .side {
        display: flex;
        align-items: center;
        width: 7px;
        padding-top: 44px;
        background: #dddde0;
    }

    .side button {
        width: 7px;
        height: 104px;
        background: #559c34;
    }

    .side button::after {
        content: "";
        border: 3px solid transparent;
        border-right: 3px solid #fff;
        border-left: 0;
    }

    /* sheet tabs */
    .sheet-bar {
        display: flex;
        height: 26px;
        flex-shrink: 0;
        background: #c3c3c6;
    }

    .sheet-nav {
        display: flex;
        width: 74px;
        padding-left: 5px;
        gap: 2px;
        box-sizing: border-box;
    }

    .sheet-nav .small {
        width: 14px;
    }

    .sheet-tab {
        width: 108px;
        padding-top: 2px;
        background: #fff;
        color: #4d9430;
    }

    .add-sheet {
        width: 30px;
    }

    .add-sheet .small {
        width: 15px;
    }

    .h-scroll {
        display: flex;
        align-items: center;
        width: 762px;
        margin-left: auto;
        margin-right: 32px;
    }

    .bar {
        width: 1px;
        height: 14px;
        background: #888;
    }

    .h-scroll button {
        width: 28px;
        height: 20px;
    }

    .h-scroll .end {
        width: 36px;
    }

    .arrow {
        border: 5px solid transparent;
    }

    .arrow.left {
        padding: 0;
        border-right-color: #555;
        border-left: 0;
    }

    .arrow.right {
        padding: 0;
        border-left-color: #555;
        border-right: 0;
    }

    .track {
        flex: 1;
    }

    .track .thumb {
        display: flex;
        align-items: center;
        justify-content: center;
        gap: 3px;
        width: 64%;
        height: 14px;
        background: #f3f3f3;
    }

    .track .thumb i {
        width: 1px;
        height: 8px;
        background: #777;
    }

    /* status bar */
    footer {
        display: flex;
        align-items: center;
        height: 21px;
        padding-right: 3px;
        flex-shrink: 0;
        background: #dcdcdf;
    }

    .macro {
        width: 16px;
        margin-left: 130px;
        margin-right: auto;
    }

    .view {
        width: 38px;
        height: 21px;
        gap: 5px;
    }

    .view + .view:has(.caret) {
        width: 42px;
    }

    .view .small {
        width: 15px;
        height: 15px;
    }

    .view.on {
        width: 36px;
        background: #c5deb6;
    }

    .percent {
        width: 38px;
        padding-left: 6px;
        box-sizing: border-box;
        white-space: nowrap;
    }

    .step {
        width: 16px;
        height: 21px;
    }

    .step i {
        width: 10px;
        height: 2px;
        background: #666;
    }

    .plus i::after {
        content: "";
        display: block;
        width: 2px;
        height: 10px;
        margin: -4px auto 0;
        background: #666;
    }

    input[type="range"] {
        width: 136px;
        height: 16px;
        margin: 0 2px 0 5px;
        appearance: none;
    }

    input[type="range"]::-webkit-slider-runnable-track {
        height: 2px;
        background: linear-gradient(to right, #7fb068 50%, #999 50%);
    }

    input[type="range"]::-webkit-slider-thumb {
        appearance: none;
        width: 14px;
        height: 14px;
        margin-top: -6px;
        border: 1px solid #888;
        border-radius: 50%;
        background: #f4f4f4;
    }

    .pointer {
        position: absolute;
        left: 357px;
        top: 712px;
        width: 16px;
        height: 16px;
    }
</style>
